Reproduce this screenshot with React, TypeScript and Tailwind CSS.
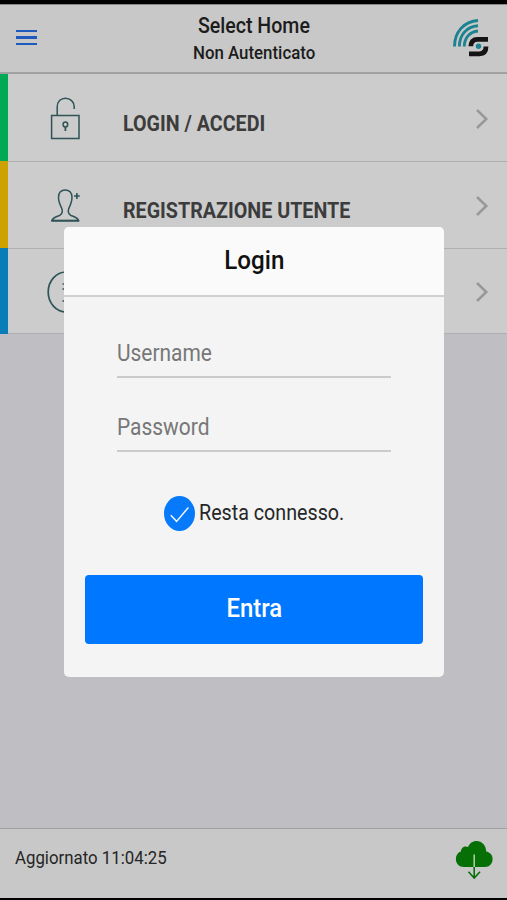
import type { ReactNode } from "react"

function LockIcon() {
  return (
    <svg width="32" height="44" viewBox="0 0 32 44" fill="none" stroke="#2f5357" strokeWidth="1.5">
      <rect x="1.6" y="18.5" width="27.4" height="23" />
      <path d="M7.2 18.5V10C7.2 4.5 10.8 1.3 15.4 1.3C20.2 1.3 24.2 4.6 24.2 9.8V12" />
      <ellipse cx="15.4" cy="27.5" rx="2.3" ry="2.5" />
      <path d="M15.4 30V34" strokeWidth="1.8" />
    </svg>
  )
}

function UserIcon() {
  return (
    <svg width="32" height="36" viewBox="0 0 32 36" fill="none" stroke="#2f5357" strokeWidth="1.5">
      <path
        d="M11.8 20.3C9.8 16.5 8.5 13 8.5 9.2C8.5 4.6 11.2 1.9 15.2 1.9C19.2 1.9 22 4.6 22 9.2C22 13 20.7 16.5 18.8 20.3C18 23.1 18.5 25.9 20.5 27.2C24 28.8 27.2 28.8 28.6 32.5H1.9C3.3 28.8 6.5 28.8 10 27.2C12.2 25.9 12.6 23.1 11.8 20.3Z"
        strokeLinejoin="round"
      />
      <path d="M1.2 32.8H29.3" strokeWidth="1.8" />
      <path d="M24 8H29.8M26.9 5.1V10.9" strokeWidth="1.6" />
    </svg>
  )
}

function InfoIcon() {
  return (
    <svg width="38" height="44" viewBox="0 0 38 44" fill="none" stroke="#2f5357" strokeWidth="1.7">
      <ellipse cx="19" cy="22" rx="17.8" ry="20" />
      <path d="M15.5 14.5L19 12.5M15.5 19H21V31M15.5 31H23" strokeWidth="1.3" />
    </svg>
  )
}

function Chevron() {
  return (
    <svg width="14" height="22" viewBox="0 0 14 22" fill="none" stroke="#989898" strokeWidth="2.5">
      <path d="M2 2L11.3 11L2 20" />
    </svg>
  )
}

function Logo() {
  return (
    <svg width="38" height="42" viewBox="0 0 38 42" fill="none">
      <g stroke="#1b8291" strokeWidth="2.9">
        <path d="M2.5 29.5C2.5 15 12 4.3 26 3.5" />
        <path d="M7.4 29.5C7.4 18 14.5 9.6 26 8.8" />
        <path d="M12.3 29.5C12.3 21 17.5 14.8 26 14" />
      </g>
      <g stroke="#151313" strokeWidth="4.8">
        <path d="M36 22.4H25.5C21.3 22.4 18.8 24.8 18.8 29.3" />
        <path d="M17 36.8H27.5C31.7 36.8 34 34.3 34 29.6" />
      </g>
      <circle cx="26.5" cy="29.2" r="2.7" fill="#1b8291" />
    </svg>
  )
}

function CloudIcon() {
  return (
    <svg width="38" height="40" viewBox="0 0 38 40" fill="none">
      <path
        d="M9 27C4 27 .9 23.5 .9 19C.9 14.6 3.5 12 6 11.4C5.8 7.8 9.8 5.3 13 7.1C14.6 3.2 17.7 1 21.3 1C27 1 31.1 5.5 31.2 11.6C35.1 12.3 37.6 15.3 37.6 19C37.6 23.6 34.5 27 30 27Z"
        fill="#067006"
      />
      <path d="M19.2 14.5V27" stroke="#a9c9a4" strokeWidth="1.6" />
      <path d="M19.2 27V38M13.5 31.8L19.2 38L25 31.8" stroke="#067006" strokeWidth="1.6" />
    </svg>
  )
}

type MenuRowProps = {
  color: string
  icon: ReactNode
  label?: string
}

function MenuRow({ color, icon, label }: MenuRowProps) {
  return (
    <li className="group flex h-[87px] last:h-[86px]">
      <div className={`w-2 ${color}`} />
      <div className="flex flex-1 items-center border-t border-[#afafaf] bg-[#cccccc] group-first:border-transparent group-last:border-b">
        <div className="flex w-[115px] justify-center pt-px">{icon}</div>
        <span className="flex-1 origin-left scale-x-[0.895] whitespace-nowrap pt-2.5 text-[22px] font-bold text-[#3c3c3c]">
          {label}
        </span>
        <div className="mr-[18px] pt-px">
          <Chevron />
        </div>
      </div>
    </li>
  )
}

function LoginDialog() {
  return (
    <div role="dialog" className="h-[450px] w-[380px] overflow-hidden rounded-[5px] bg-[#f4f4f4]">
      <div className="flex h-[70px] items-center justify-center border-b-2 border-[#d0d0d0] bg-[#fafafa]">
        <h2 className="scale-x-[0.93] pb-0.5 text-[26px] font-medium text-[#111]">Login</h2>
      </div>
      <form className="flex flex-col px-[21px]">
        <div className="mx-8 mt-[31px] flex h-[50px] items-center border-b-2 border-[#cbcbcb] pt-[5px]">
          <input
            type="text"
            placeholder="Username"
            className="w-full origin-left scale-x-[0.91] text-[23px] outline-none placeholder:text-[#777]"
          />
        </div>
        <div className="mx-8 mt-6 flex h-[50px] items-center border-b-2 border-[#cbcbcb] pt-[5px]">
          <input
            type="password"
            placeholder="Password"
            className="w-full origin-left scale-x-[0.91] text-[23px] outline-none placeholder:text-[#777]"
          />
        </div>
        <label className="ml-[79px] mt-11 flex h-[35px] items-center gap-1">
          <svg width="31" height="35" viewBox="0 0 31 35" fill="none">
            <ellipse cx="15.5" cy="17.5" rx="15.5" ry="17.5" fill="#0779fb" />
            <path d="M6.8 19.2L12.6 25.4L24.4 11.4" stroke="#e8f4ff" strokeWidth="1.6" />
          </svg>
          <span className="origin-left scale-x-[0.895] whitespace-nowrap pb-0.5 text-[22px] text-[#262626]">
            Resta connesso.
          </span>
        </label>
        <button
          type="button"
          className="mt-[44px] h-[69px] rounded-[4px] bg-[#0077ff] pb-0.5 text-[26px] font-medium text-white"
        >
          <span className="inline-block scale-x-[0.92]">Entra</span>
        </button>
      </form>
    </div>
  )
}

export default function App() {
  return (
    <div className="relative flex h-[900px] w-[507px] flex-col overflow-hidden border-b-2 border-t-4 border-black bg-[#bfbfc3] font-[Roboto,sans-serif]">
      {/* Header */}
      <header className="flex h-[70px] items-center justify-between border-b-2 border-t border-b-[#a1a1a1] border-t-[#888] bg-[#c8c8c8] pl-4 pr-[17px]">
        <button type="button" className="flex w-[38px] flex-col gap-1 pb-0.5">
          <span className="h-[2.5px] w-[21px] bg-[#2059bd]" />
          <span className="h-[2.5px] w-[21px] bg-[#2059bd]" />
          <span className="h-[2.5px] w-[21px] bg-[#2059bd]" />
        </button>
        <div className="flex flex-col items-center pl-px pt-0.5 font-medium text-[#1c1c1c]">
          <h1 className="scale-x-[0.89] text-[22px] leading-7">Select Home</h1>
          <p className="scale-x-[0.91] pl-px text-[18.5px] leading-[27px]">Non Autenticato</p>
        </div>
        <div className="pb-0.5">
          <Logo />
        </div>
      </header>

      {/* Menu */}
      <ul>
        <MenuRow color="bg-[#00aa55]" icon={<LockIcon />} label="LOGIN / ACCEDI" />
        <MenuRow color="bg-[#cda200]" icon={<UserIcon />} label="REGISTRAZIONE UTENTE" />
        <MenuRow color="bg-[#087db8]" icon={<InfoIcon />} />
      </ul>

      {/* Footer */}
      <footer className="mt-auto flex h-[70px] items-center justify-between border-t border-[#a0a0a2] bg-[#c8c8c8] pl-[15px] pr-[14px]">
        <span className="origin-left scale-x-[0.885] pb-2.5 text-[19px] text-[#252525]">Aggiornato 11:04:25</span>
        <div className="pb-2">
          <CloudIcon />
        </div>
      </footer>

      {/* Login modal */}
      <div className="absolute left-16 top-[223px]">
        <LoginDialog />
      </div>
    </div>
  )
}
